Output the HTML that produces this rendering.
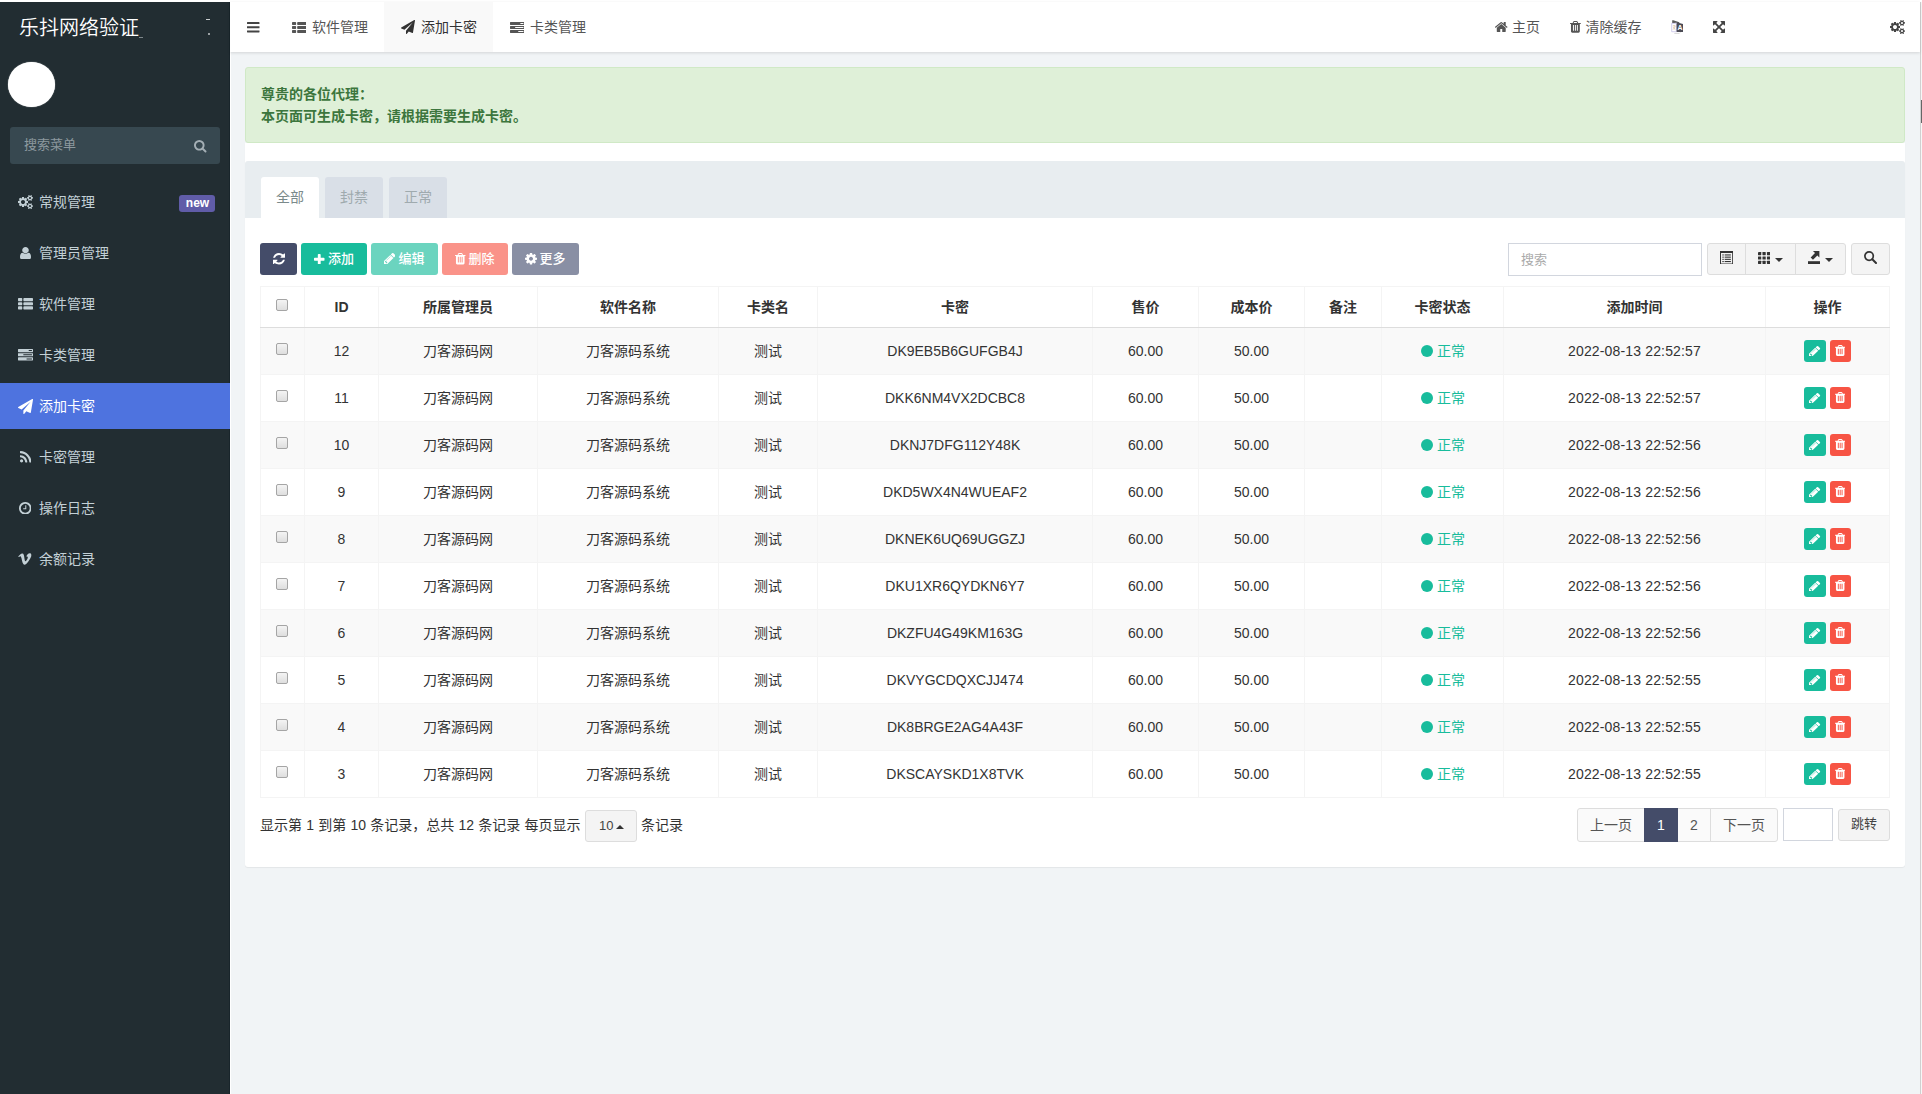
<!DOCTYPE html>
<html lang="zh-CN">
<head>
<meta charset="utf-8">
<title>乐抖网络验证</title>
<style>
*{box-sizing:border-box;}
html,body{margin:0;padding:0;}
body{width:1922px;height:1094px;overflow:hidden;position:relative;background:#fff;
  font-family:"Liberation Sans","Noto Sans CJK SC",sans-serif;font-size:14px;color:#444;line-height:20px;}
div,span,b,i{white-space:nowrap;}
.a{position:absolute;}
/* ---------- sidebar ---------- */
#side{position:absolute;left:0;top:2px;width:230px;height:1092px;background:#222d32;box-shadow:inset -1px 0 0 #19252b;}
#logo{position:absolute;left:19px;top:12px;font-size:20px;line-height:28px;color:#fff;font-weight:350;}
#avatar{position:absolute;left:8px;top:60px;width:47px;height:45px;border-radius:50%;background:#fff;box-shadow:0 0 1px #fff;}
#msearch{position:absolute;left:10px;top:125px;width:210px;height:37px;border-radius:3px;background:#374850;}
#msearch span{position:absolute;left:14px;top:8px;font-size:13px;line-height:20px;color:#8d999f;}
.mi{position:absolute;left:0;width:230px;height:46px;color:#c3d0d6;font-size:14px;}
.mi.act{background:#4e73df;color:#fff;}
.mi b{position:absolute;left:39px;top:13px;line-height:20px;font-weight:400;}
.mi i{position:absolute;left:179px;top:16px;width:36px;height:17px;border-radius:3px;background:#605ca8;color:#fff;
  font-style:normal;font-weight:700;font-size:12px;line-height:17px;text-align:center;padding-left:1px;}
/* ---------- top nav ---------- */
#nav{position:absolute;left:230px;top:2px;width:1690px;height:50px;background:#fff;box-shadow:0 1px 3px rgba(0,0,0,.13);z-index:5;}
#nav .tab{position:absolute;top:0;height:50px;color:#555;font-size:14px;}
#nav .tab.on{background:#f9f9f9;color:#333;}
#nav .tab span{position:absolute;top:15px;line-height:20px;}
#nav .r{position:absolute;top:15px;line-height:20px;color:#555;font-size:14px;}
/* ---------- content ---------- */
#main{position:absolute;left:230px;top:52px;width:1690px;height:1042px;background:#f1f4f6;}
#alert{position:absolute;left:245px;top:67px;width:1660px;height:76px;background:#dff0d8;border:1px solid #d0e9c6;border-radius:3px;
  color:#3c763d;font-weight:700;font-size:14px;line-height:22px;padding:15px 15px;}
#panel{position:absolute;left:245px;top:143px;width:1660px;height:724px;background:#fff;border-radius:0 0 3px 3px;box-shadow:0 1px 1px rgba(0,0,0,.06);}
#phead{position:absolute;left:245px;top:161px;width:1660px;height:57px;background:#e8edf0;border-radius:3px 3px 0 0;}
.pt{position:absolute;top:177px;width:58px;height:41px;background:#d9dfe7;color:#9faaae;font-size:14px;line-height:20px;text-align:center;padding-top:10px;border-radius:3px 3px 0 0;}
.pt.on{background:#fff;color:#7b8a8b;}
.btn{position:absolute;top:243px;height:32px;border-radius:3px;color:#fff;font-size:13px;line-height:20px;}
.btn span{position:absolute;top:6px;font-weight:500;}
#sinput{position:absolute;left:1508px;top:243px;width:194px;height:33px;border:1px solid #d2d6de;border-radius:0;background:#fff;color:#aaa;font-size:13px;line-height:19px;padding:6px 12px;}
.gbtn{position:absolute;top:243px;height:32px;background:#f4f4f4;border:1px solid #ddd;}
/* table */
#tbl{position:absolute;left:260px;top:286px;width:1629px;border-collapse:collapse;table-layout:fixed;font-size:14px;color:#333;}
#tbl th,#tbl td{border:1px solid #f4f4f4;text-align:center;vertical-align:middle;padding:0;white-space:nowrap;overflow:hidden;line-height:20px;}
#tbl th{height:41px;font-weight:700;font-size:14px;color:#333;border-bottom:1px solid #ddd;padding-top:0;padding-bottom:1px;}
#tbl td{height:47px;padding-top:0;}
#tbl tbody tr:nth-child(odd){background:#f9f9f9;}
.cb{display:inline-block;width:12px;height:12px;border:1px solid #a5a5a5;border-radius:2px;background:linear-gradient(#f4f4f4,#dedede);vertical-align:middle;position:relative;top:-3px;left:-1px;}
.st{color:#18bc9c;}
.tm{letter-spacing:.15px;}
.st:before{content:"";display:inline-block;width:12.5px;height:12.5px;border-radius:50%;background:#18bc9c;margin-right:4.5px;position:relative;top:1px;left:.5px;}
.ob{display:inline-block;height:22px;border-radius:3px;vertical-align:middle;position:relative;top:0;left:-.5px;}
.ob.e{background:#18bc9c;margin-right:4px;width:22px;}
.ob.d{background:#f75444;width:21px;}
/* pagination */
#pinfo{position:absolute;left:260px;top:815px;line-height:20px;font-size:14px;color:#333;word-spacing:.35px;}
.pg{position:absolute;top:808px;height:34px;border:1px solid #ddd;background:#fafafa;color:#555;font-size:14px;line-height:20px;text-align:center;padding-top:6px;}
</style>
</head>
<body>
<div id="side">
  <div id="logo">乐抖网络验证</div>
  <div id="avatar"></div>
  <div id="msearch"><span>搜索菜单</span><svg style="position:absolute;left:184px;top:13px;" width="12.5" height="12.5" viewBox="64 128 1664 1664" preserveAspectRatio="none"><path fill="#a4afb5" d="M1216 832q0-185-131.500-316.500t-316.500-131.500-316.500 131.500-131.500 316.500 131.500 316.500 316.500 131.500 316.500-131.500 131.500-316.500zm512 832q0 52-38 90t-90 38q-54 0-90-38l-343-342q-179 124-399 124-143 0-273.500-55.500t-225-150-150-225-55.500-273.500 55.500-273.500 150-225 225-150 273.500-55.500 273.500 55.500 225 150 150 225 55.500 273.500q0 220-124 399l343 343q37 37 37 90z"/></svg></div>
  <div class="mi" style="top:177px"><svg style="position:absolute;left:18px;top:16px;" width="15.0" height="14.0" viewBox="0 16 1920 1761" preserveAspectRatio="none"><path fill="#c3d0d6" d="M896 896q0-106-75-181t-181-75-181 75-75 181 75 181 181 75 181-75 75-181zm768 512q0-52-38-90t-90-38-90 38-38 90q0 53 37.500 90.500t90.500 37.500 90.500-37.500 37.500-90.500zm0-1024q0-52-38-90t-90-38-90 38-38 90q0 53 37.500 90.500t90.500 37.500 90.500-37.500 37.500-90.500zm-384 421v185q0 10-7 19.500t-16 10.500l-155 24q-11 35-32 76 34 48 90 115 7 11 7 20 0 12-7 19-23 30-82.500 89.500t-78.500 59.500q-11 0-21-7l-115-90q-37 19-77 31-11 108-23 155-7 24-30 24h-186q-11 0-20-7.500t-10-17.500l-23-153q-34-10-75-31l-118 89q-7 7-20 7-11 0-21-8-144-133-144-160 0-9 7-19 10-14 41-53t47-61q-23-44-35-82l-152-24q-10-1-17-9.500t-7-19.500v-185q0-10 7-19.500t16-10.500l155-24q11-35 32-76-34-48-90-115-7-11-7-20 0-12 7-20 22-30 82-89t79-59q11 0 21 7l115 90q34-18 77-32 11-108 23-154 7-24 30-24h186q11 0 20 7.500t10 17.500l23 153q34 10 75 31l118-89q8-7 20-7 11 0 21 8 144 133 144 160 0 8-7 19-12 16-42 54t-45 60q23 48 34 82l152 23q10 2 17 10.500t7 19.500zm640 533v140q0 16-149 31-12 27-30 52 51 113 51 138 0 4-4 7-122 71-124 71-8 0-46-47t-52-68q-20 2-30 2t-30-2q-14 21-52 68t-46 47q-2 0-124-71-4-3-4-7 0-25 51-138-18-25-30-52-149-15-149-31v-140q0-16 149-31 13-29 30-52-51-113-51-138 0-4 4-7 4-2 35-20t59-34 30-16q8 0 46 46.500t52 67.500q20-2 30-2t30 2q51-71 92-112l6-2q4 0 124 70 4 3 4 7 0 25-51 138 17 23 30 52 149 15 149 31zm0-1024v140q0 16-149 31-12 27-30 52 51 113 51 138 0 4-4 7-122 71-124 71-8 0-46-47t-52-68q-20 2-30 2t-30-2q-14 21-52 68t-46 47q-2 0-124-71-4-3-4-7 0-25 51-138-18-25-30-52-149-15-149-31v-140q0-16 149-31 13-29 30-52-51-113-51-138 0-4 4-7 4-2 35-20t59-34 30-16q8 0 46 46.500t52 67.500q20-2 30-2t30 2q51-71 92-112l6-2q4 0 124 70 4 3 4 7 0 25-51 138 17 23 30 52 149 15 149 31z"/></svg><b>常规管理</b><i>new</i></div>
  <div class="mi" style="top:228px"><svg style="position:absolute;left:19.5px;top:16.5px;" width="11.0" height="12.5" viewBox="0 128 1280 1536" preserveAspectRatio="none"><path fill="#c3d0d6" d="M1280 1399q0 109-62.500 187t-150.500 78h-854q-88 0-150.500-78t-62.500-187q0-85 8.500-160.500t31.500-152 58.500-131 94-89 134.500-34.500q131 128 313 128t313-128q76 0 134.500 34.500t94 89 58.500 131 31.500 152 8.500 160.500zm-256-887q0 159-112.500 271.500t-271.500 112.500-271.500-112.500-112.500-271.500 112.500-271.500 271.500-112.500 271.500 112.500 112.500 271.500z"/></svg><b>管理员管理</b></div>
  <div class="mi" style="top:279px"><svg style="position:absolute;left:17.5px;top:17px;" width="15.0" height="11.5" viewBox="0 128 1792 1408" preserveAspectRatio="none"><path fill="#c3d0d6" d="M512 1248v192q0 40-28 68t-68 28H96q-40 0-68-28t-28-68v-192q0-40 28-68t68-28h320q40 0 68 28t28 68zm0-512v192q0 40-28 68t-68 28H96q-40 0-68-28T0 928V736q0-40 28-68t68-28h320q40 0 68 28t28 68zm1280 512v192q0 40-28 68t-68 28H736q-40 0-68-28t-28-68v-192q0-40 28-68t68-28h960q40 0 68 28t28 68zM512 224v192q0 40-28 68t-68 28H96q-40 0-68-28T0 416V224q0-40 28-68t68-28h320q40 0 68 28t28 68zm1280 512v192q0 40-28 68t-68 28H736q-40 0-68-28t-28-68V736q0-40 28-68t68-28h960q40 0 68 28t28 68zm0-512v192q0 40-28 68t-68 28H736q-40 0-68-28t-28-68V224q0-40 28-68t68-28h960q40 0 68 28t28 68z"/></svg><b>软件管理</b></div>
  <div class="mi" style="top:330px"><svg style="position:absolute;left:17.5px;top:17px;" width="15.0" height="11.5" viewBox="0 128 1792 1408" preserveAspectRatio="none"><path fill="#c3d0d6" d="M1024 1408h640v-128h-640v128zm-384-512h1024v-128h-1024v128zm640-512h384v-128h-384v128zm512 832v256q0 26-19 45t-45 19h-1664q-26 0-45-19t-19-45v-256q0-26 19-45t45-19h1664q26 0 45 19t19 45zm0-512v256q0 26-19 45t-45 19h-1664q-26 0-45-19t-19-45v-256q0-26 19-45t45-19h1664q26 0 45 19t19 45zm0-512v256q0 26-19 45t-45 19h-1664q-26 0-45-19t-19-45v-256q0-26 19-45t45-19h1664q26 0 45 19t19 45z"/></svg><b>卡类管理</b></div>
  <div class="mi act" style="top:381px"><svg style="position:absolute;left:17.5px;top:15.5px;" width="15.0" height="15.0" viewBox="-0.1 0 1792.0 1792" preserveAspectRatio="none"><path fill="#fff" d="M1764 11q33 24 27 64l-256 1536q-5 29-32 45-14 8-31 8-11 0-24-5l-453-185-242 295q-18 23-49 23-13 0-22-4-19-7-30.500-23.500t-11.500-36.500v-349l864-1059-1069 925-395-162q-37-14-40-55-2-40 32-59l1664-960q15-9 32-9 20 0 36 11z"/></svg><b>添加卡密</b></div>
  <div class="mi" style="top:432px"><svg style="position:absolute;left:19.5px;top:17px;" width="11.5" height="11.5" viewBox="0 128 1408.2 1408" preserveAspectRatio="none"><path fill="#c3d0d6" d="M384 1344q0 80-56 136t-136 56-136-56-56-136 56-136 136-56 136 56 56 136zm512 123q2 28-17 48-18 21-47 21h-135q-25 0-43-16.500t-20-41.500q-22-229-184.500-391.500t-391.500-184.500q-25-2-41.500-20t-16.500-43v-135q0-29 21-47 17-17 43-17h5q160 13 306 80.500t259 181.500q114 113 181.500 259t80.500 306zm512 2q2 27-18 47-18 20-46 20h-143q-26 0-44.500-17.500t-19.500-42.500q-12-215-101-408.500t-231.500-336-336-231.500-408.500-102q-25-1-42.500-19.500t-17.500-43.500v-143q0-28 20-46 18-18 44-18h3q262 13 501.500 120t425.500 294q187 186 294 425.500t120 501.500z"/></svg><b>卡密管理</b></div>
  <div class="mi" style="top:483px"><svg style="position:absolute;left:18.5px;top:16.5px;" width="12.5" height="12.5" viewBox="128 128 1536 1536" preserveAspectRatio="none"><path fill="#c3d0d6" d="M1024 544v448q0 14-9 23t-23 9h-320q-14 0-23-9t-9-23v-64q0-14 9-23t23-9h224v-352q0-14 9-23t23-9h64q14 0 23 9t9 23zm416 352q0-148-73-273t-198-198-273-73-273 73-198 198-73 273 73 273 198 198 273 73 273-73 198-198 73-273zm224 0q0 209-103 385.500t-279.500 279.500-385.500 103-385.500-103-279.500-279.500-103-385.500 103-385.500 279.500-279.500 385.500-103 385.500 103 279.500 279.500 103 385.500z"/></svg><b>操作日志</b></div>
  <div class="mi" style="top:534px"><svg style="position:absolute;left:18px;top:17px;" width="13.5" height="12.0" viewBox="0 0 14 12" preserveAspectRatio="none" fill="#c3d0d6" stroke="none" color="#c3d0d6"><path d="M0.2 3.4 C1.6 2.1 3.1 0.6 4.3 0.5 C5.9 0.3 6.2 2.2 6.5 4.2 C6.8 6.2 7.1 8.3 7.7 8.3 C8.3 8.3 9.5 6.4 10 5.2 C10.5 4 9.9 3.1 8.6 3.7 C9.3 1.3 11 -0.1 12.7 0.3 C14.2 0.7 14 2.9 13.2 4.6 C12.1 6.9 8.9 11.8 6.8 11.8 C4.8 11.8 4.3 8 3.7 5.6 C3.3 3.9 3 3 2.3 3.2 C1.8 3.3 1.2 3.9 0.9 4.1 Z"/></svg><b>余额记录</b></div>
</div>

<div id="nav">
  <svg style="position:absolute;left:17px;top:20px;" width="12.5" height="10.5" viewBox="0 256 1536 1280" preserveAspectRatio="none"><path fill="#444" d="M1536 1344v128q0 26-19 45t-45 19H64q-26 0-45-19t-19-45v-128q0-26 19-45t45-19h1408q26 0 45 19t19 45zm0-512v128q0 26-19 45t-45 19H64q-26 0-45-19T0 960V832q0-26 19-45t45-19h1408q26 0 45 19t19 45zm0-512v128q0 26-19 45t-45 19H64q-26 0-45-19T0 448V320q0-26 19-45t45-19h1408q26 0 45 19t19 45z"/></svg>
  <div class="tab" style="left:46px;width:108px"><svg style="position:absolute;left:15.5px;top:19.5px;" width="14.5" height="11.0" viewBox="0 128 1792 1408" preserveAspectRatio="none"><path fill="#555" d="M512 1248v192q0 40-28 68t-68 28H96q-40 0-68-28t-28-68v-192q0-40 28-68t68-28h320q40 0 68 28t28 68zm0-512v192q0 40-28 68t-68 28H96q-40 0-68-28T0 928V736q0-40 28-68t68-28h320q40 0 68 28t28 68zm1280 512v192q0 40-28 68t-68 28H736q-40 0-68-28t-28-68v-192q0-40 28-68t68-28h960q40 0 68 28t28 68zM512 224v192q0 40-28 68t-68 28H96q-40 0-68-28T0 416V224q0-40 28-68t68-28h320q40 0 68 28t28 68zm1280 512v192q0 40-28 68t-68 28H736q-40 0-68-28t-28-68V736q0-40 28-68t68-28h960q40 0 68 28t28 68zm0-512v192q0 40-28 68t-68 28H736q-40 0-68-28t-28-68V224q0-40 28-68t68-28h960q40 0 68 28t28 68z"/></svg><span style="left:36px">软件管理</span></div>
  <div class="tab on" style="left:154px;width:109px"><svg style="position:absolute;left:17px;top:18px;" width="14.0" height="14.0" viewBox="-0.1 0 1792.0 1792" preserveAspectRatio="none"><path fill="#333" d="M1764 11q33 24 27 64l-256 1536q-5 29-32 45-14 8-31 8-11 0-24-5l-453-185-242 295q-18 23-49 23-13 0-22-4-19-7-30.500-23.500t-11.500-36.500v-349l864-1059-1069 925-395-162q-37-14-40-55-2-40 32-59l1664-960q15-9 32-9 20 0 36 11z"/></svg><span style="left:37px">添加卡密</span></div>
  <div class="tab" style="left:263px;width:108px"><svg style="position:absolute;left:16.5px;top:19.5px;" width="14.5" height="11.0" viewBox="0 128 1792 1408" preserveAspectRatio="none"><path fill="#555" d="M1024 1408h640v-128h-640v128zm-384-512h1024v-128h-1024v128zm640-512h384v-128h-384v128zm512 832v256q0 26-19 45t-45 19h-1664q-26 0-45-19t-19-45v-256q0-26 19-45t45-19h1664q26 0 45 19t19 45zm0-512v256q0 26-19 45t-45 19h-1664q-26 0-45-19t-19-45v-256q0-26 19-45t45-19h1664q26 0 45 19t19 45zm0-512v256q0 26-19 45t-45 19h-1664q-26 0-45-19t-19-45v-256q0-26 19-45t45-19h1664q26 0 45 19t19 45z"/></svg><span style="left:37px">卡类管理</span></div>
  <svg style="position:absolute;left:1265px;top:20px;" width="12.5" height="10.0" viewBox="89.9 253 1612.2 1283" preserveAspectRatio="none"><path fill="#555" d="M1472 992v480q0 26-19 45t-45 19h-384v-384h-256v384h-384q-26 0-45-19t-19-45v-480q0-1 .5-3t.5-3l575-474 575 474q1 2 1 6zm223-69l-62 74q-8 9-21 11h-3q-13 0-21-7l-692-577-692 577q-12 8-24 7-13-2-21-11l-62-74q-8-10-7-23.500t11-21.500l719-599q32-26 76-26t76 26l244 204v-195q0-14 9-23t23-9h192q14 0 23 9t9 23v408l219 182q10 8 11 21.500t-7 23.500z"/></svg><div class="r" style="left:1282px">主页</div>
  <svg style="position:absolute;left:1340.2px;top:19px;" width="10.8" height="11.7" viewBox="0 128 1408 1536" preserveAspectRatio="none"><path fill="#555" d="M512 1376v-704q0-14-9-23t-23-9h-64q-14 0-23 9t-9 23v704q0 14 9 23t23 9h64q14 0 23-9t9-23zm256 0v-704q0-14-9-23t-23-9h-64q-14 0-23 9t-9 23v704q0 14 9 23t23 9h64q14 0 23-9t9-23zm256 0v-704q0-14-9-23t-23-9h-64q-14 0-23 9t-9 23v704q0 14 9 23t23 9h64q14 0 23-9t9-23zm-544-992h448l-48-117q-7-9-17-11h-317q-10 2-17 11zm928 32v64q0 14-9 23t-23 9h-96v948q0 83-47 143.500t-113 60.500h-832q-66 0-113-58.500t-47-141.500v-952h-96q-14 0-23-9t-9-23v-64q0-14 9-23t23-9h309l70-167q15-37 54-63t79-26h320q40 0 79 26t54 63l70 167h309q14 0 23 9t9 23z"/></svg><div class="r" style="left:1355.5px">清除缓存</div>
  <svg style="position:absolute;left:1440.8px;top:18px;" width="12.5" height="14.0" viewBox="0 0 12.5 14" preserveAspectRatio="none" fill="#555" stroke="none" color="#555"><path d="M1.2 0.3 L2.3 0.2 L8.3 2.2 L8.3 3.4 L5.6 2.7 L1.2 3.3 Z" fill="#5a5a5a"/><path d="M0.7 3.4 H5.4 V11.7 H0.7 Z" fill="#fff" stroke="#c6c0e6" stroke-width=".8"/><path d="M5.6 2.3 L12.2 4 L12.2 11.9 L5.6 11.9 Z" fill="#4b4b55"/><text x="8.9" y="10.2" font-size="6.9" font-weight="700" font-family="Liberation Sans, sans-serif" fill="#fff" text-anchor="middle">A</text><path d="M1.8 5.9h2.6M3.1 5v.9M2 9.6C3.2 8.9 3.9 7.6 4.1 6M2.2 7.1C2.7 8.4 3.5 9.2 4.4 9.6" stroke="#d9b48a" stroke-width=".6" fill="none"/><path d="M3.3 13.4 H8.4 L9.4 12.4" stroke="#c4c4c4" stroke-width=".7" fill="none"/></svg>
  <svg style="position:absolute;left:1483px;top:19px;" width="12.0" height="12.0" viewBox="0 0 1536 1536" preserveAspectRatio="none"><path fill="#444" d="M1283 413l-355 355 355 355 144-144q29-31 70-14 39 17 39 59v448q0 26-19 45t-45 19h-448q-42 0-59-40-17-39 14-69l144-144-355-355-355 355 144 144q31 30 14 69-17 40-59 40h-448q-26 0-45-19t-19-45v-448q0-42 40-59 39-17 69 14l144 144 355-355-355-355-144 144q-19 19-45 19-12 0-24-5-40-17-40-59v-448q0-26 19-45t45-19h448q42 0 59 40 17 39-14 69l-144 144 355 355 355-355-144-144q-31-30-14-69 17-40 59-40h448q26 0 45 19t19 45v448q0 42-39 59-13 5-25 5-26 0-45-19z"/></svg>
  <svg style="position:absolute;left:1660px;top:18px;" width="15.0" height="14.0" viewBox="0 16 1920 1761" preserveAspectRatio="none"><path fill="#444" d="M896 896q0-106-75-181t-181-75-181 75-75 181 75 181 181 75 181-75 75-181zm768 512q0-52-38-90t-90-38-90 38-38 90q0 53 37.500 90.500t90.500 37.500 90.500-37.500 37.500-90.500zm0-1024q0-52-38-90t-90-38-90 38-38 90q0 53 37.500 90.500t90.500 37.500 90.500-37.500 37.500-90.500zm-384 421v185q0 10-7 19.500t-16 10.500l-155 24q-11 35-32 76 34 48 90 115 7 11 7 20 0 12-7 19-23 30-82.500 89.500t-78.500 59.500q-11 0-21-7l-115-90q-37 19-77 31-11 108-23 155-7 24-30 24h-186q-11 0-20-7.500t-10-17.500l-23-153q-34-10-75-31l-118 89q-7 7-20 7-11 0-21-8-144-133-144-160 0-9 7-19 10-14 41-53t47-61q-23-44-35-82l-152-24q-10-1-17-9.500t-7-19.500v-185q0-10 7-19.500t16-10.500l155-24q11-35 32-76-34-48-90-115-7-11-7-20 0-12 7-20 22-30 82-89t79-59q11 0 21 7l115 90q34-18 77-32 11-108 23-154 7-24 30-24h186q11 0 20 7.500t10 17.500l23 153q34 10 75 31l118-89q8-7 20-7 11 0 21 8 144 133 144 160 0 8-7 19-12 16-42 54t-45 60q23 48 34 82l152 23q10 2 17 10.500t7 19.500zm640 533v140q0 16-149 31-12 27-30 52 51 113 51 138 0 4-4 7-122 71-124 71-8 0-46-47t-52-68q-20 2-30 2t-30-2q-14 21-52 68t-46 47q-2 0-124-71-4-3-4-7 0-25 51-138-18-25-30-52-149-15-149-31v-140q0-16 149-31 13-29 30-52-51-113-51-138 0-4 4-7 4-2 35-20t59-34 30-16q8 0 46 46.500t52 67.500q20-2 30-2t30 2q51-71 92-112l6-2q4 0 124 70 4 3 4 7 0 25-51 138 17 23 30 52 149 15 149 31zm0-1024v140q0 16-149 31-12 27-30 52 51 113 51 138 0 4-4 7-122 71-124 71-8 0-46-47t-52-68q-20 2-30 2t-30-2q-14 21-52 68t-46 47q-2 0-124-71-4-3-4-7 0-25 51-138-18-25-30-52-149-15-149-31v-140q0-16 149-31 13-29 30-52-51-113-51-138 0-4 4-7 4-2 35-20t59-34 30-16q8 0 46 46.500t52 67.500q20-2 30-2t30 2q51-71 92-112l6-2q4 0 124 70 4 3 4 7 0 25-51 138 17 23 30 52 149 15 149 31z"/></svg>
</div>

<div id="main"></div>
<div id="alert">尊贵的各位代理：<br>本页面可生成卡密，请根据需要生成卡密。</div>
<div id="panel"></div>
<div id="phead"></div>
<div class="pt on" style="left:261px">全部</div>
<div class="pt" style="left:325px">封禁</div>
<div class="pt" style="left:389px">正常</div>

<div class="btn" style="left:260px;width:37px;background:#444c69"><svg style="position:absolute;left:12.5px;top:10px;" width="12.0" height="11.5" viewBox="0 128 1536 1536" preserveAspectRatio="none"><path fill="#fff" d="M1511 1056q0 5-1 7-64 268-268 434.500t-478 166.500q-146 0-282.500-55t-243.500-157l-129 129q-19 19-45 19t-45-19-19-45v-448q0-26 19-45t45-19h448q26 0 45 19t19 45-19 45l-137 137q71 66 161 102t187 36q134 0 250-65t186-179q11-17 53-117 8-23 30-23h192q13 0 22.500 9.500t9.500 22.500zm25-800v448q0 26-19 45t-45 19h-448q-26 0-45-19t-19-45 19-45l138-138q-148-137-349-137-134 0-250 65t-186 179q-11 17-53 117-8 23-30 23h-199q-13 0-22.500-9.500t-9.500-22.500v-7q65-268 270-434.500t480-166.500q146 0 284 55.500t245 156.500l130-129q19-19 45-19t45 19 19 45z"/></svg></div>
<div class="btn" style="left:301px;width:66px;background:#18bc9c"><svg style="position:absolute;left:13px;top:10.5px;" width="10.5" height="10.5" viewBox="0 192 1408 1408" preserveAspectRatio="none"><path fill="#fff" d="M1408 800v192q0 40-28 68t-68 28H896v416q0 40-28 68t-68 28H608q-40 0-68-28t-28-68v-416H96q-40 0-68-28T0 992V800q0-40 28-68t68-28h416V288q0-40 28-68t68-28h192q40 0 68 28t28 68v416h416q40 0 68 28t28 68z"/></svg><span style="left:27px">添加</span></div>
<div class="btn" style="left:371px;width:67px;background:#6bd4bf"><svg style="position:absolute;left:12.5px;top:10px;" width="11.5" height="11.2" viewBox="0 149 1515 1515" preserveAspectRatio="none"><path fill="#fff" d="M363 1536l91-91-235-235-91 91v107h128v128h107zm523-928q0-22-22-22-10 0-17 7l-542 542q-7 7-7 17 0 22 22 22 10 0 17-7l542-542q7-7 7-17zm-54-192l416 416-832 832h-416v-416zm683 96q0 53-37 90l-166 166-416-416 166-165q36-38 90-38 53 0 91 38l235 234q37 39 37 91z"/></svg><span style="left:27.5px">编辑</span></div>
<div class="btn" style="left:442px;width:66px;background:#fa9389"><svg style="position:absolute;left:13px;top:10px;" width="10.5" height="11.5" viewBox="0 128 1408 1536" preserveAspectRatio="none"><path fill="#fff" d="M512 1376v-704q0-14-9-23t-23-9h-64q-14 0-23 9t-9 23v704q0 14 9 23t23 9h64q14 0 23-9t9-23zm256 0v-704q0-14-9-23t-23-9h-64q-14 0-23 9t-9 23v704q0 14 9 23t23 9h64q14 0 23-9t9-23zm256 0v-704q0-14-9-23t-23-9h-64q-14 0-23 9t-9 23v704q0 14 9 23t23 9h64q14 0 23-9t9-23zm-544-992h448l-48-117q-7-9-17-11h-317q-10 2-17 11zm928 32v64q0 14-9 23t-23 9h-96v948q0 83-47 143.500t-113 60.500h-832q-66 0-113-58.500t-47-141.500v-952h-96q-14 0-23-9t-9-23v-64q0-14 9-23t23-9h309l70-167q15-37 54-63t79-26h320q40 0 79 26t54 63l70 167h309q14 0 23 9t9 23z"/></svg><span style="left:26.5px">删除</span></div>
<div class="btn" style="left:512px;width:67px;background:#898fa4"><svg style="position:absolute;left:12.5px;top:10px;" width="12.0" height="11.5" viewBox="128 128 1536 1536" preserveAspectRatio="none"><path fill="#fff" d="M1152 896q0-106-75-181t-181-75-181 75-75 181 75 181 181 75 181-75 75-181zm512-109v222q0 12-8 23t-20 13l-185 28q-19 54-39 91 35 50 107 138 10 12 10 25t-9 23q-27 37-99 108t-94 71q-12 0-26-9l-138-108q-44 23-91 38-16 136-29 186-7 28-36 28h-222q-14 0-24.500-8.500t-11.500-21.500l-28-184q-49-16-90-37l-141 107q-10 9-25 9-14 0-25-11-126-114-165-168-7-10-7-23 0-12 8-23 15-21 51-66.500t54-70.500q-27-50-41-99l-183-27q-13-2-21-12.500t-8-23.500v-222q0-12 8-23t19-13l186-28q14-46 39-92-40-57-107-138-10-12-10-24 0-10 9-23 26-36 98.500-107.500t94.500-71.500q13 0 26 10l138 107q44-23 91-38 16-136 29-186 7-28 36-28h222q14 0 24.500 8.500t11.500 21.500l28 184q49 16 90 37l142-107q9-9 24-9 13 0 25 10 129 119 165 170 7 8 7 22 0 12-8 23-15 21-51 66.500t-54 70.500q26 50 41 98l183 28q13 2 21 12.500t8 23.500z"/></svg><span style="left:27.5px">更多</span></div>
<div id="sinput">搜索</div>
<div class="gbtn" style="left:1707px;width:39px;border-radius:3px 0 0 3px"><svg style="position:absolute;left:12px;top:6.7px;" width="13.2" height="13.4" viewBox="0 0 13 13.4" preserveAspectRatio="none" fill="#333" stroke="none" color="#333"><path fill-rule="evenodd" d="M0 0h13v13.4H0zM1 2v10.4h11V2z"/><rect x="2.3" y="3.4" width="1.4" height="1.1"/><rect x="4.6" y="3.4" width="6.1" height="1.1"/><rect x="2.3" y="5.6" width="1.4" height="1.1"/><rect x="4.6" y="5.6" width="6.1" height="1.1"/><rect x="2.3" y="7.8" width="1.4" height="1.1"/><rect x="4.6" y="7.8" width="6.1" height="1.1"/><rect x="2.3" y="10" width="1.4" height="1.1"/><rect x="4.6" y="10" width="6.1" height="1.1"/></svg></div>
<div class="gbtn" style="left:1745px;width:51px"><svg style="position:absolute;left:11.8px;top:8px;" width="12.2" height="12.0" viewBox="0 0 12 12" preserveAspectRatio="none" fill="#333" stroke="none" color="#333"><rect x="0.0" y="0.0" width="3.2" height="3.2" rx=".4"/><rect x="4.4" y="0.0" width="3.2" height="3.2" rx=".4"/><rect x="8.8" y="0.0" width="3.2" height="3.2" rx=".4"/><rect x="0.0" y="4.4" width="3.2" height="3.2" rx=".4"/><rect x="4.4" y="4.4" width="3.2" height="3.2" rx=".4"/><rect x="8.8" y="4.4" width="3.2" height="3.2" rx=".4"/><rect x="0.0" y="8.8" width="3.2" height="3.2" rx=".4"/><rect x="4.4" y="8.8" width="3.2" height="3.2" rx=".4"/><rect x="8.8" y="8.8" width="3.2" height="3.2" rx=".4"/></svg><svg style="position:absolute;left:29px;top:14px;" width="8.0" height="4.0" viewBox="0 0 8 4" preserveAspectRatio="none" fill="#333" stroke="none" color="#333"><path d="M0 0h8l-4 4z"/></svg></div>
<div class="gbtn" style="left:1795px;width:51px;border-radius:0 3px 3px 0"><svg style="position:absolute;left:11.8px;top:6.7px;" width="12.2" height="13.4" viewBox="0 0 12 13.4" preserveAspectRatio="none" fill="#333" stroke="none" color="#333"><path d="M0 10.2h12v3.2H0z"/><path d="M4.9 0.1H11.2V6.4L9.2 4.4 4.9 8.7 2.6 6.4 6.9 2.1z"/></svg><svg style="position:absolute;left:29px;top:14px;" width="8.0" height="4.0" viewBox="0 0 8 4" preserveAspectRatio="none" fill="#333" stroke="none" color="#333"><path d="M0 0h8l-4 4z"/></svg></div>
<div class="gbtn" style="left:1851px;width:39px;border-radius:3px"><svg style="position:absolute;left:12px;top:7px;" width="13.0" height="13.0" viewBox="0 0 13 13" preserveAspectRatio="none" fill="#333" stroke="none" color="#333"><circle cx="5.1" cy="5.1" r="4.2" fill="none" stroke="currentColor" stroke-width="1.7"/><path d="M8.3 8.3 L12 12" stroke="currentColor" stroke-width="2" stroke-linecap="round"/></svg></div>

<table id="tbl">
  <colgroup><col style="width:44px"><col style="width:74px"><col style="width:159px"><col style="width:181px"><col style="width:99px"><col style="width:275px"><col style="width:106px"><col style="width:106px"><col style="width:77px"><col style="width:122px"><col style="width:262px"><col style="width:124px"></colgroup>
  <thead><tr><th><span class="cb"></span></th><th>ID</th><th>所属管理员</th><th>软件名称</th><th>卡类名</th><th>卡密</th><th>售价</th><th>成本价</th><th>备注</th><th>卡密状态</th><th>添加时间</th><th>操作</th></tr></thead>
  <tbody>
    <tr><td><span class="cb"></span></td><td>12</td><td>刀客源码网</td><td>刀客源码系统</td><td>测试</td><td>DK9EB5B6GUFGB4J</td><td>60.00</td><td>50.00</td><td></td><td><span class="st">正常</span></td><td class="tm">2022-08-13 22:52:57</td><td><span class="ob e"><svg style="position:absolute;left:5.9px;top:5.5px;" width="11.2" height="10.6" viewBox="0 149 1515 1515" preserveAspectRatio="none"><path fill="#fff" d="M363 1536l91-91-235-235-91 91v107h128v128h107zm523-928q0-22-22-22-10 0-17 7l-542 542q-7 7-7 17 0 22 22 22 10 0 17-7l542-542q7-7 7-17zm-54-192l416 416-832 832h-416v-416zm683 96q0 53-37 90l-166 166-416-416 166-165q36-38 90-38 53 0 91 38l235 234q37 39 37 91z"/></svg></span><span class="ob d"><svg style="position:absolute;left:5.3px;top:5px;" width="10.4" height="11.0" viewBox="0 128 1408 1536" preserveAspectRatio="none"><path fill="#fff" d="M512 1376v-704q0-14-9-23t-23-9h-64q-14 0-23 9t-9 23v704q0 14 9 23t23 9h64q14 0 23-9t9-23zm256 0v-704q0-14-9-23t-23-9h-64q-14 0-23 9t-9 23v704q0 14 9 23t23 9h64q14 0 23-9t9-23zm256 0v-704q0-14-9-23t-23-9h-64q-14 0-23 9t-9 23v704q0 14 9 23t23 9h64q14 0 23-9t9-23zm-544-992h448l-48-117q-7-9-17-11h-317q-10 2-17 11zm928 32v64q0 14-9 23t-23 9h-96v948q0 83-47 143.500t-113 60.500h-832q-66 0-113-58.500t-47-141.500v-952h-96q-14 0-23-9t-9-23v-64q0-14 9-23t23-9h309l70-167q15-37 54-63t79-26h320q40 0 79 26t54 63l70 167h309q14 0 23 9t9 23z"/></svg></span></td></tr>
    <tr><td><span class="cb"></span></td><td>11</td><td>刀客源码网</td><td>刀客源码系统</td><td>测试</td><td>DKK6NM4VX2DCBC8</td><td>60.00</td><td>50.00</td><td></td><td><span class="st">正常</span></td><td class="tm">2022-08-13 22:52:57</td><td><span class="ob e"><svg style="position:absolute;left:5.9px;top:5.5px;" width="11.2" height="10.6" viewBox="0 149 1515 1515" preserveAspectRatio="none"><path fill="#fff" d="M363 1536l91-91-235-235-91 91v107h128v128h107zm523-928q0-22-22-22-10 0-17 7l-542 542q-7 7-7 17 0 22 22 22 10 0 17-7l542-542q7-7 7-17zm-54-192l416 416-832 832h-416v-416zm683 96q0 53-37 90l-166 166-416-416 166-165q36-38 90-38 53 0 91 38l235 234q37 39 37 91z"/></svg></span><span class="ob d"><svg style="position:absolute;left:5.3px;top:5px;" width="10.4" height="11.0" viewBox="0 128 1408 1536" preserveAspectRatio="none"><path fill="#fff" d="M512 1376v-704q0-14-9-23t-23-9h-64q-14 0-23 9t-9 23v704q0 14 9 23t23 9h64q14 0 23-9t9-23zm256 0v-704q0-14-9-23t-23-9h-64q-14 0-23 9t-9 23v704q0 14 9 23t23 9h64q14 0 23-9t9-23zm256 0v-704q0-14-9-23t-23-9h-64q-14 0-23 9t-9 23v704q0 14 9 23t23 9h64q14 0 23-9t9-23zm-544-992h448l-48-117q-7-9-17-11h-317q-10 2-17 11zm928 32v64q0 14-9 23t-23 9h-96v948q0 83-47 143.500t-113 60.500h-832q-66 0-113-58.500t-47-141.500v-952h-96q-14 0-23-9t-9-23v-64q0-14 9-23t23-9h309l70-167q15-37 54-63t79-26h320q40 0 79 26t54 63l70 167h309q14 0 23 9t9 23z"/></svg></span></td></tr>
    <tr><td><span class="cb"></span></td><td>10</td><td>刀客源码网</td><td>刀客源码系统</td><td>测试</td><td>DKNJ7DFG112Y48K</td><td>60.00</td><td>50.00</td><td></td><td><span class="st">正常</span></td><td class="tm">2022-08-13 22:52:56</td><td><span class="ob e"><svg style="position:absolute;left:5.9px;top:5.5px;" width="11.2" height="10.6" viewBox="0 149 1515 1515" preserveAspectRatio="none"><path fill="#fff" d="M363 1536l91-91-235-235-91 91v107h128v128h107zm523-928q0-22-22-22-10 0-17 7l-542 542q-7 7-7 17 0 22 22 22 10 0 17-7l542-542q7-7 7-17zm-54-192l416 416-832 832h-416v-416zm683 96q0 53-37 90l-166 166-416-416 166-165q36-38 90-38 53 0 91 38l235 234q37 39 37 91z"/></svg></span><span class="ob d"><svg style="position:absolute;left:5.3px;top:5px;" width="10.4" height="11.0" viewBox="0 128 1408 1536" preserveAspectRatio="none"><path fill="#fff" d="M512 1376v-704q0-14-9-23t-23-9h-64q-14 0-23 9t-9 23v704q0 14 9 23t23 9h64q14 0 23-9t9-23zm256 0v-704q0-14-9-23t-23-9h-64q-14 0-23 9t-9 23v704q0 14 9 23t23 9h64q14 0 23-9t9-23zm256 0v-704q0-14-9-23t-23-9h-64q-14 0-23 9t-9 23v704q0 14 9 23t23 9h64q14 0 23-9t9-23zm-544-992h448l-48-117q-7-9-17-11h-317q-10 2-17 11zm928 32v64q0 14-9 23t-23 9h-96v948q0 83-47 143.500t-113 60.500h-832q-66 0-113-58.500t-47-141.500v-952h-96q-14 0-23-9t-9-23v-64q0-14 9-23t23-9h309l70-167q15-37 54-63t79-26h320q40 0 79 26t54 63l70 167h309q14 0 23 9t9 23z"/></svg></span></td></tr>
    <tr><td><span class="cb"></span></td><td>9</td><td>刀客源码网</td><td>刀客源码系统</td><td>测试</td><td>DKD5WX4N4WUEAF2</td><td>60.00</td><td>50.00</td><td></td><td><span class="st">正常</span></td><td class="tm">2022-08-13 22:52:56</td><td><span class="ob e"><svg style="position:absolute;left:5.9px;top:5.5px;" width="11.2" height="10.6" viewBox="0 149 1515 1515" preserveAspectRatio="none"><path fill="#fff" d="M363 1536l91-91-235-235-91 91v107h128v128h107zm523-928q0-22-22-22-10 0-17 7l-542 542q-7 7-7 17 0 22 22 22 10 0 17-7l542-542q7-7 7-17zm-54-192l416 416-832 832h-416v-416zm683 96q0 53-37 90l-166 166-416-416 166-165q36-38 90-38 53 0 91 38l235 234q37 39 37 91z"/></svg></span><span class="ob d"><svg style="position:absolute;left:5.3px;top:5px;" width="10.4" height="11.0" viewBox="0 128 1408 1536" preserveAspectRatio="none"><path fill="#fff" d="M512 1376v-704q0-14-9-23t-23-9h-64q-14 0-23 9t-9 23v704q0 14 9 23t23 9h64q14 0 23-9t9-23zm256 0v-704q0-14-9-23t-23-9h-64q-14 0-23 9t-9 23v704q0 14 9 23t23 9h64q14 0 23-9t9-23zm256 0v-704q0-14-9-23t-23-9h-64q-14 0-23 9t-9 23v704q0 14 9 23t23 9h64q14 0 23-9t9-23zm-544-992h448l-48-117q-7-9-17-11h-317q-10 2-17 11zm928 32v64q0 14-9 23t-23 9h-96v948q0 83-47 143.500t-113 60.500h-832q-66 0-113-58.500t-47-141.500v-952h-96q-14 0-23-9t-9-23v-64q0-14 9-23t23-9h309l70-167q15-37 54-63t79-26h320q40 0 79 26t54 63l70 167h309q14 0 23 9t9 23z"/></svg></span></td></tr>
    <tr><td><span class="cb"></span></td><td>8</td><td>刀客源码网</td><td>刀客源码系统</td><td>测试</td><td>DKNEK6UQ69UGGZJ</td><td>60.00</td><td>50.00</td><td></td><td><span class="st">正常</span></td><td class="tm">2022-08-13 22:52:56</td><td><span class="ob e"><svg style="position:absolute;left:5.9px;top:5.5px;" width="11.2" height="10.6" viewBox="0 149 1515 1515" preserveAspectRatio="none"><path fill="#fff" d="M363 1536l91-91-235-235-91 91v107h128v128h107zm523-928q0-22-22-22-10 0-17 7l-542 542q-7 7-7 17 0 22 22 22 10 0 17-7l542-542q7-7 7-17zm-54-192l416 416-832 832h-416v-416zm683 96q0 53-37 90l-166 166-416-416 166-165q36-38 90-38 53 0 91 38l235 234q37 39 37 91z"/></svg></span><span class="ob d"><svg style="position:absolute;left:5.3px;top:5px;" width="10.4" height="11.0" viewBox="0 128 1408 1536" preserveAspectRatio="none"><path fill="#fff" d="M512 1376v-704q0-14-9-23t-23-9h-64q-14 0-23 9t-9 23v704q0 14 9 23t23 9h64q14 0 23-9t9-23zm256 0v-704q0-14-9-23t-23-9h-64q-14 0-23 9t-9 23v704q0 14 9 23t23 9h64q14 0 23-9t9-23zm256 0v-704q0-14-9-23t-23-9h-64q-14 0-23 9t-9 23v704q0 14 9 23t23 9h64q14 0 23-9t9-23zm-544-992h448l-48-117q-7-9-17-11h-317q-10 2-17 11zm928 32v64q0 14-9 23t-23 9h-96v948q0 83-47 143.500t-113 60.500h-832q-66 0-113-58.500t-47-141.500v-952h-96q-14 0-23-9t-9-23v-64q0-14 9-23t23-9h309l70-167q15-37 54-63t79-26h320q40 0 79 26t54 63l70 167h309q14 0 23 9t9 23z"/></svg></span></td></tr>
    <tr><td><span class="cb"></span></td><td>7</td><td>刀客源码网</td><td>刀客源码系统</td><td>测试</td><td>DKU1XR6QYDKN6Y7</td><td>60.00</td><td>50.00</td><td></td><td><span class="st">正常</span></td><td class="tm">2022-08-13 22:52:56</td><td><span class="ob e"><svg style="position:absolute;left:5.9px;top:5.5px;" width="11.2" height="10.6" viewBox="0 149 1515 1515" preserveAspectRatio="none"><path fill="#fff" d="M363 1536l91-91-235-235-91 91v107h128v128h107zm523-928q0-22-22-22-10 0-17 7l-542 542q-7 7-7 17 0 22 22 22 10 0 17-7l542-542q7-7 7-17zm-54-192l416 416-832 832h-416v-416zm683 96q0 53-37 90l-166 166-416-416 166-165q36-38 90-38 53 0 91 38l235 234q37 39 37 91z"/></svg></span><span class="ob d"><svg style="position:absolute;left:5.3px;top:5px;" width="10.4" height="11.0" viewBox="0 128 1408 1536" preserveAspectRatio="none"><path fill="#fff" d="M512 1376v-704q0-14-9-23t-23-9h-64q-14 0-23 9t-9 23v704q0 14 9 23t23 9h64q14 0 23-9t9-23zm256 0v-704q0-14-9-23t-23-9h-64q-14 0-23 9t-9 23v704q0 14 9 23t23 9h64q14 0 23-9t9-23zm256 0v-704q0-14-9-23t-23-9h-64q-14 0-23 9t-9 23v704q0 14 9 23t23 9h64q14 0 23-9t9-23zm-544-992h448l-48-117q-7-9-17-11h-317q-10 2-17 11zm928 32v64q0 14-9 23t-23 9h-96v948q0 83-47 143.500t-113 60.500h-832q-66 0-113-58.500t-47-141.500v-952h-96q-14 0-23-9t-9-23v-64q0-14 9-23t23-9h309l70-167q15-37 54-63t79-26h320q40 0 79 26t54 63l70 167h309q14 0 23 9t9 23z"/></svg></span></td></tr>
    <tr><td><span class="cb"></span></td><td>6</td><td>刀客源码网</td><td>刀客源码系统</td><td>测试</td><td>DKZFU4G49KM163G</td><td>60.00</td><td>50.00</td><td></td><td><span class="st">正常</span></td><td class="tm">2022-08-13 22:52:56</td><td><span class="ob e"><svg style="position:absolute;left:5.9px;top:5.5px;" width="11.2" height="10.6" viewBox="0 149 1515 1515" preserveAspectRatio="none"><path fill="#fff" d="M363 1536l91-91-235-235-91 91v107h128v128h107zm523-928q0-22-22-22-10 0-17 7l-542 542q-7 7-7 17 0 22 22 22 10 0 17-7l542-542q7-7 7-17zm-54-192l416 416-832 832h-416v-416zm683 96q0 53-37 90l-166 166-416-416 166-165q36-38 90-38 53 0 91 38l235 234q37 39 37 91z"/></svg></span><span class="ob d"><svg style="position:absolute;left:5.3px;top:5px;" width="10.4" height="11.0" viewBox="0 128 1408 1536" preserveAspectRatio="none"><path fill="#fff" d="M512 1376v-704q0-14-9-23t-23-9h-64q-14 0-23 9t-9 23v704q0 14 9 23t23 9h64q14 0 23-9t9-23zm256 0v-704q0-14-9-23t-23-9h-64q-14 0-23 9t-9 23v704q0 14 9 23t23 9h64q14 0 23-9t9-23zm256 0v-704q0-14-9-23t-23-9h-64q-14 0-23 9t-9 23v704q0 14 9 23t23 9h64q14 0 23-9t9-23zm-544-992h448l-48-117q-7-9-17-11h-317q-10 2-17 11zm928 32v64q0 14-9 23t-23 9h-96v948q0 83-47 143.500t-113 60.500h-832q-66 0-113-58.500t-47-141.500v-952h-96q-14 0-23-9t-9-23v-64q0-14 9-23t23-9h309l70-167q15-37 54-63t79-26h320q40 0 79 26t54 63l70 167h309q14 0 23 9t9 23z"/></svg></span></td></tr>
    <tr><td><span class="cb"></span></td><td>5</td><td>刀客源码网</td><td>刀客源码系统</td><td>测试</td><td>DKVYGCDQXCJJ474</td><td>60.00</td><td>50.00</td><td></td><td><span class="st">正常</span></td><td class="tm">2022-08-13 22:52:55</td><td><span class="ob e"><svg style="position:absolute;left:5.9px;top:5.5px;" width="11.2" height="10.6" viewBox="0 149 1515 1515" preserveAspectRatio="none"><path fill="#fff" d="M363 1536l91-91-235-235-91 91v107h128v128h107zm523-928q0-22-22-22-10 0-17 7l-542 542q-7 7-7 17 0 22 22 22 10 0 17-7l542-542q7-7 7-17zm-54-192l416 416-832 832h-416v-416zm683 96q0 53-37 90l-166 166-416-416 166-165q36-38 90-38 53 0 91 38l235 234q37 39 37 91z"/></svg></span><span class="ob d"><svg style="position:absolute;left:5.3px;top:5px;" width="10.4" height="11.0" viewBox="0 128 1408 1536" preserveAspectRatio="none"><path fill="#fff" d="M512 1376v-704q0-14-9-23t-23-9h-64q-14 0-23 9t-9 23v704q0 14 9 23t23 9h64q14 0 23-9t9-23zm256 0v-704q0-14-9-23t-23-9h-64q-14 0-23 9t-9 23v704q0 14 9 23t23 9h64q14 0 23-9t9-23zm256 0v-704q0-14-9-23t-23-9h-64q-14 0-23 9t-9 23v704q0 14 9 23t23 9h64q14 0 23-9t9-23zm-544-992h448l-48-117q-7-9-17-11h-317q-10 2-17 11zm928 32v64q0 14-9 23t-23 9h-96v948q0 83-47 143.500t-113 60.500h-832q-66 0-113-58.500t-47-141.500v-952h-96q-14 0-23-9t-9-23v-64q0-14 9-23t23-9h309l70-167q15-37 54-63t79-26h320q40 0 79 26t54 63l70 167h309q14 0 23 9t9 23z"/></svg></span></td></tr>
    <tr><td><span class="cb"></span></td><td>4</td><td>刀客源码网</td><td>刀客源码系统</td><td>测试</td><td>DK8BRGE2AG4A43F</td><td>60.00</td><td>50.00</td><td></td><td><span class="st">正常</span></td><td class="tm">2022-08-13 22:52:55</td><td><span class="ob e"><svg style="position:absolute;left:5.9px;top:5.5px;" width="11.2" height="10.6" viewBox="0 149 1515 1515" preserveAspectRatio="none"><path fill="#fff" d="M363 1536l91-91-235-235-91 91v107h128v128h107zm523-928q0-22-22-22-10 0-17 7l-542 542q-7 7-7 17 0 22 22 22 10 0 17-7l542-542q7-7 7-17zm-54-192l416 416-832 832h-416v-416zm683 96q0 53-37 90l-166 166-416-416 166-165q36-38 90-38 53 0 91 38l235 234q37 39 37 91z"/></svg></span><span class="ob d"><svg style="position:absolute;left:5.3px;top:5px;" width="10.4" height="11.0" viewBox="0 128 1408 1536" preserveAspectRatio="none"><path fill="#fff" d="M512 1376v-704q0-14-9-23t-23-9h-64q-14 0-23 9t-9 23v704q0 14 9 23t23 9h64q14 0 23-9t9-23zm256 0v-704q0-14-9-23t-23-9h-64q-14 0-23 9t-9 23v704q0 14 9 23t23 9h64q14 0 23-9t9-23zm256 0v-704q0-14-9-23t-23-9h-64q-14 0-23 9t-9 23v704q0 14 9 23t23 9h64q14 0 23-9t9-23zm-544-992h448l-48-117q-7-9-17-11h-317q-10 2-17 11zm928 32v64q0 14-9 23t-23 9h-96v948q0 83-47 143.500t-113 60.500h-832q-66 0-113-58.500t-47-141.500v-952h-96q-14 0-23-9t-9-23v-64q0-14 9-23t23-9h309l70-167q15-37 54-63t79-26h320q40 0 79 26t54 63l70 167h309q14 0 23 9t9 23z"/></svg></span></td></tr>
    <tr><td><span class="cb"></span></td><td>3</td><td>刀客源码网</td><td>刀客源码系统</td><td>测试</td><td>DKSCAYSKD1X8TVK</td><td>60.00</td><td>50.00</td><td></td><td><span class="st">正常</span></td><td class="tm">2022-08-13 22:52:55</td><td><span class="ob e"><svg style="position:absolute;left:5.9px;top:5.5px;" width="11.2" height="10.6" viewBox="0 149 1515 1515" preserveAspectRatio="none"><path fill="#fff" d="M363 1536l91-91-235-235-91 91v107h128v128h107zm523-928q0-22-22-22-10 0-17 7l-542 542q-7 7-7 17 0 22 22 22 10 0 17-7l542-542q7-7 7-17zm-54-192l416 416-832 832h-416v-416zm683 96q0 53-37 90l-166 166-416-416 166-165q36-38 90-38 53 0 91 38l235 234q37 39 37 91z"/></svg></span><span class="ob d"><svg style="position:absolute;left:5.3px;top:5px;" width="10.4" height="11.0" viewBox="0 128 1408 1536" preserveAspectRatio="none"><path fill="#fff" d="M512 1376v-704q0-14-9-23t-23-9h-64q-14 0-23 9t-9 23v704q0 14 9 23t23 9h64q14 0 23-9t9-23zm256 0v-704q0-14-9-23t-23-9h-64q-14 0-23 9t-9 23v704q0 14 9 23t23 9h64q14 0 23-9t9-23zm256 0v-704q0-14-9-23t-23-9h-64q-14 0-23 9t-9 23v704q0 14 9 23t23 9h64q14 0 23-9t9-23zm-544-992h448l-48-117q-7-9-17-11h-317q-10 2-17 11zm928 32v64q0 14-9 23t-23 9h-96v948q0 83-47 143.500t-113 60.500h-832q-66 0-113-58.500t-47-141.500v-952h-96q-14 0-23-9t-9-23v-64q0-14 9-23t23-9h309l70-167q15-37 54-63t79-26h320q40 0 79 26t54 63l70 167h309q14 0 23 9t9 23z"/></svg></span></td></tr>
  </tbody>
</table>
<div id="pinfo">显示第 1 到第 10 条记录，总共 12 条记录 每页显示</div>
<div class="a" style="left:585px;top:810px;width:52px;height:32px;background:#f4f4f4;border:1px solid #ddd;border-radius:3px;font-size:13px;color:#444;line-height:20px;padding:5px 0 0 13px">10<svg style="position:absolute;left:30px;top:14px;" width="8.0" height="4.0" viewBox="0 0 8 4" preserveAspectRatio="none" fill="#333" stroke="none" color="#333"><path d="M0 4h8l-4-4z"/></svg></div>
<div class="a" style="left:641px;top:815px;color:#333">条记录</div>
<div class="pg" style="left:1577px;width:68px;border-radius:3px 0 0 3px">上一页</div>
<div class="pg" style="left:1644px;width:34px;background:#444c69;border-color:#444c69;color:#fff">1</div>
<div class="pg" style="left:1678px;width:33px;border-left:0">2</div>
<div class="pg" style="left:1710px;width:68px;border-radius:0 3px 3px 0">下一页</div>
<div class="a" style="left:1783px;top:808px;width:50px;height:33px;border:1px solid #d2d6de;background:#fff"></div>
<div class="a" style="left:1838px;top:809px;width:52px;height:32px;border:1px solid #ddd;border-radius:3px;background:#f4f4f4;color:#444;font-size:13px;text-align:center;padding-top:4px">跳转</div>
<div class="a" style="left:1920px;top:2px;width:1px;height:1092px;background:#d0d0d0"></div>
<div class="a" style="left:1921px;top:2px;width:1px;height:1092px;background:#f7f7f7"></div>
<div class="a" style="left:1921px;top:100px;width:1px;height:23px;background:#666"></div>
<div class="a" style="left:230px;top:52px;width:1px;height:1042px;background:#fff"></div>
<div class="a" style="left:1855px;top:21px;width:4px;height:1px;background:#b5b5bb"></div>
<div class="a" style="left:206px;top:19px;width:4px;height:1px;background:#c9cdcf"></div>
<div class="a" style="left:208px;top:33px;width:2px;height:2px;background:#9aa0a3"></div>
<div class="a" style="left:139px;top:37px;width:4px;height:1px;background:#7d868a"></div>
</body>
</html>
